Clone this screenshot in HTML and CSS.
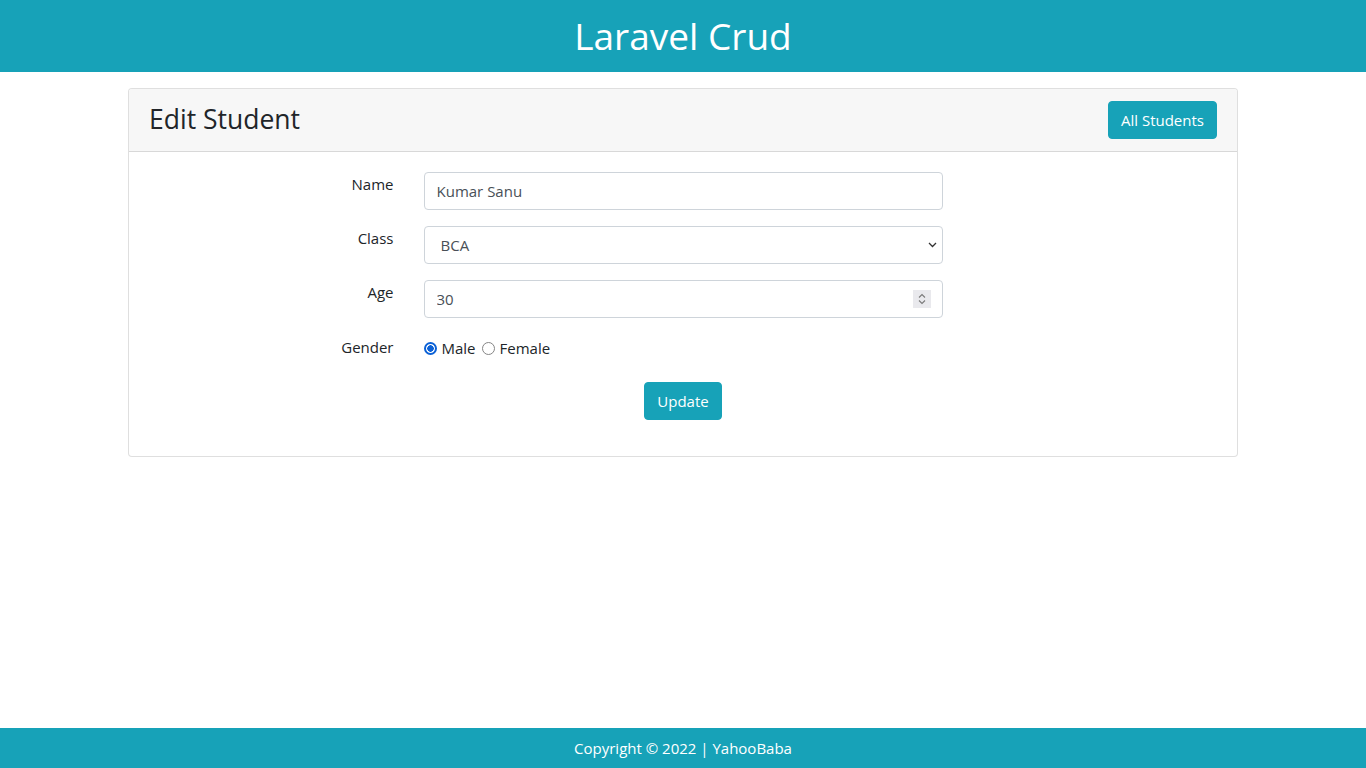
FILE: index.html
```html
<!DOCTYPE html>
<html lang="en">
<head>
<meta charset="utf-8">
<title>Laravel Crud</title>
<link rel="stylesheet" href="styles.css">
</head>
<body>
<header class="site-header">
  <h1 class="site-title">Laravel Crud</h1>
</header>
<main class="container">
  <div class="card">
    <div class="card-header">
      <h3 class="card-title">Edit Student</h3>
      <a class="btn btn-info" href="#">All Students</a>
    </div>
    <div class="card-body">
      <form class="form">
        <div class="form-row">
          <label class="col-label">Name</label>
          <div class="col-field">
            <input class="form-control" type="text" value="Kumar Sanu">
          </div>
        </div>
        <div class="form-row">
          <label class="col-label">Class</label>
          <div class="col-field">
            <div class="select-wrap">
              <select class="form-control form-select">
                <option>BCA</option>
              </select>
              <svg class="select-arrow" width="9" height="6" viewBox="0 0 9 6"><path d="M1 1 L4.5 4.5 L8 1" fill="none" stroke="#333" stroke-width="1.3"/></svg>
            </div>
          </div>
        </div>
        <div class="form-row">
          <label class="col-label">Age</label>
          <div class="col-field">
            <div class="select-wrap">
              <input class="form-control" type="text" value="30">
              <span class="spinner"><svg width="18" height="18" viewBox="0 0 18 18"><path d="M6 7.5 L9 4.5 L12 7.5" fill="none" stroke="#7a7a7a" stroke-width="1.1"/><path d="M6 10.5 L9 13.5 L12 10.5" fill="none" stroke="#7a7a7a" stroke-width="1.1"/></svg></span>
            </div>
          </div>
        </div>
        <div class="form-row gender-row">
          <label class="col-label">Gender</label>
          <div class="col-field radios">
            <label class="radio"><input type="radio" name="gender" checked> Male</label>
            <label class="radio"><input type="radio" name="gender"> Female</label>
          </div>
        </div>
        <div class="submit-row">
          <button class="btn btn-info" type="button">Update</button>
        </div>
      </form>
    </div>
  </div>
</main>
<footer class="site-footer">Copyright © 2022 | YahooBaba</footer>
</body>
</html>
```
FILE: styles.css
```css
* { box-sizing: border-box; }
html, body { margin: 0; padding: 0; }
body {
  font-family: "Open Sans", "Noto Sans", sans-serif;
  font-size: 16px;
  line-height: 1.5;
  color: #212529;
  background: #fff;
  min-height: 100vh;
  display: flex;
  flex-direction: column;
}
.site-header {
  background: #17a2b8;
  color: #fff;
  text-align: center;
  padding: 12px 0;
}
.site-title {
  margin: 0;
  font-size: 37px;
  font-weight: 400;
  line-height: 48px;
}
.container {
  width: 1140px;
  margin: 16px auto 0;
  padding: 0 15px;
}
.card {
  border: 1px solid rgba(0,0,0,.125);
  border-radius: 4px;
  background: #fff;
}
.card-header {
  background: #f7f7f7;
  border-bottom: 1px solid rgba(0,0,0,.125);
  padding: 12px 20px;
  display: flex;
  justify-content: space-between;
  align-items: center;
  border-radius: 3px 3px 0 0;
}
.card-title {
  margin: 0;
  font-size: 26.5px;
  font-weight: 400;
  line-height: 34px;
  position: relative;
  top: -1px;
}
.btn {
  display: inline-block;
  font-family: inherit;
  font-size: 15px;
  line-height: 24px;
  padding: 6px 12px;
  border: 1px solid transparent;
  border-radius: 4px;
  text-decoration: none;
  cursor: pointer;
}
.btn-info {
  background: #17a2b8;
  border-color: #17a2b8;
  color: #fff;
}
.card-body { padding: 20px; }
.form-row {
  display: flex;
  margin: 0 -15px 16px;
}
.col-label {
  flex: 0 0 25%;
  padding: 1px 15px 0;
  text-align: right;
  font-size: 15px;
}
.col-field {
  flex: 0 0 50%;
  padding: 0 15px;
}
.form-control {
  display: block;
  width: 100%;
  height: 38px;
  padding: 6px 12px;
  font-family: inherit;
  font-size: 15px;
  line-height: 24px;
  color: #495057;
  background: #fff;
  border: 1px solid #ced4da;
  border-radius: 4px;
  outline: none;
}
.form-select {
  appearance: none;
  -webkit-appearance: none;
  padding-left: 16px;
}
.select-wrap { position: relative; }
.select-arrow {
  position: absolute;
  right: 6px;
  top: 16px;
  pointer-events: none;
}
.spinner {
  position: absolute;
  right: 12px;
  top: 10px;
  width: 18px;
  height: 18px;
  background: #e9e9ed;
  display: flex;
}
.gender-row { min-height: 32px; }
.gender-row .col-label { padding-top: 2px; }
.radios {
  display: flex;
  align-items: center;
  height: 28px;
  font-size: 15px;
}
.radio {
  display: inline-flex;
  align-items: center;
  margin-right: 6px;
}
.radio input {
  appearance: none;
  -webkit-appearance: none;
  margin: 0 5px 0 0;
  width: 13px;
  height: 13px;
  border: 1.5px solid #858585;
  border-radius: 50%;
  background: #fff;
}
.radio input:checked {
  border: 2px solid #0b61d6;
  background: radial-gradient(circle, #0b61d6 0 3px, #fff 3.5px);
}
.submit-row {
  text-align: center;
  margin-bottom: 16px;
}
.site-footer {
  margin-top: auto;
  background: #17a2b8;
  color: #fff;
  text-align: center;
  height: 40px;
  line-height: 40px;
  font-size: 15px;
}
```
